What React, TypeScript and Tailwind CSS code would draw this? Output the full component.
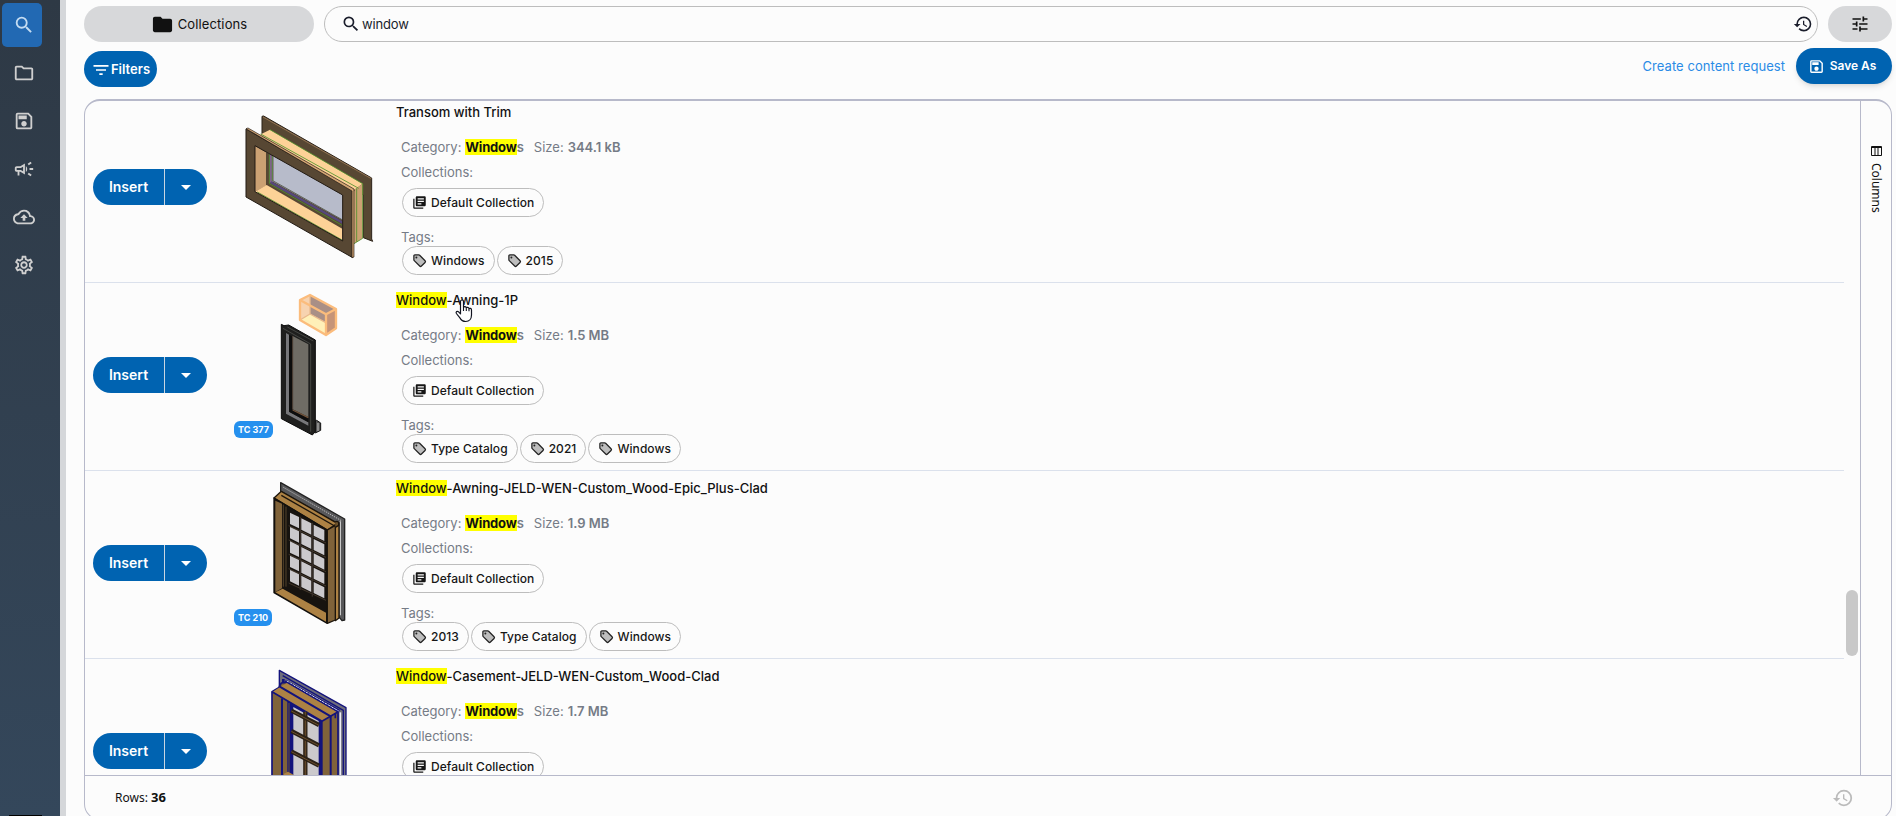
import React from 'react';
import {
  MdArrowDropDown,
  MdFilterList,
  MdFolder,
  MdHistory,
  MdLibraryBooks,
  MdOutlineCampaign,
  MdOutlineCloudUpload,
  MdOutlineFolder,
  MdOutlineSave,
  MdOutlineSettings,
  MdSearch,
  MdTune,
} from 'react-icons/md';

const TransomArt = () => (
  <svg width="180" height="187" viewBox="0 0 180 187">
    <g transform="translate(-140 0) scale(.33333)" strokeLinejoin="round">
      <path d="M546 64L551 63L875 249V432L878 439L850 428V300L546 125Z" fill="#574733" stroke="#2a2118" strokeWidth="3" />
      <path d="M549 66L874 251" stroke="#b08a60" strokeWidth="2" />
      <path d="M538 120L570 104L848 266L824 284Z" fill="#fdd297" />
      <path d="M822 284L848 266V430L822 446Z" fill="#cba173" />
      <path d="M542 117L836 280M570 104L848 266V430L822 446M830 280V440" fill="none" stroke="#4f8f2b" strokeWidth="2.5" />
      <path d="M520 113L824 287" stroke="#2a2118" strokeWidth="2" />
      <path d="M525 152L788 300V438L525 290Z" fill="#574733" />
      <path d="M525 152L558 172V272L525 290Z" fill="#cba173" />
      <path d="M525 290L560 270L788 402V438Z" fill="#fdd297" />
      <path d="M580 182L788 300V376L580 260Z" fill="#b7bbca" />
      <path d="M568 178L580 184V260L568 264Z" fill="#7d6488" />
      <path d="M572 262L788 383" stroke="#55487c" strokeWidth="7" />
      <path d="M580 258L788 375" stroke="#4c5145" strokeWidth="2.5" />
      <path d="M568 176V266L788 392M532 291L788 436M577 182V258" fill="none" stroke="#4f8f2b" strokeWidth="2.5" />
      <path
        d="M498 102L818 286V488L498 306ZM525 152V290L788 438V300Z"
        fill="#574733"
        fillRule="evenodd"
        stroke="#211a13"
        strokeWidth="3"
      />
      <path d="M498 101L504 99L822 282V486L816 488V288Z" fill="#d3a574" stroke="#211a13" strokeWidth="2" />
    </g>
  </svg>
);

const AwningArt = () => (
  <svg width="180" height="187" viewBox="0 0 180 187">
    <g transform="translate(0 2) scale(.33333)" strokeLinejoin="round">
      <path d="M240 45L270 30V87L240 105Z" fill="#f7d3b0" />
      <path d="M270 30L350 72V130L270 87Z" fill="#a98f86" />
      <path d="M240 105L270 87L350 130L318 150Z" fill="#fff0b8" />
      <path d="M318 88L350 72V130L318 150Z" fill="#c69478" />
      <path d="M270 30V87L240 105M270 87L316 112" fill="none" stroke="#e9b98c" strokeWidth="4" />
      <path d="M240 45L270 30L348 72V130L318 150L240 105ZM240 45L318 88L348 72M318 88V150" fill="none" stroke="#fbbc7c" strokeWidth="7" />

      <path d="M278 412L290 406L302 414V436L286 444Z" fill="#555" stroke="#111" strokeWidth="3" />
      <path d="M294 414V438" stroke="#aaa" strokeWidth="4" />
      <path d="M184 118L192 122L206 120L286 165V440L277 450L184 401Z" fill="#1f1f1e" stroke="#0b0b0b" strokeWidth="3" />
      <path d="M198 144L207 149V380L265 412V422L198 386Z" fill="#77777a" />
      <path d="M207 149L217 154V374L265 400V412L207 380Z" fill="#0d0d0d" />
      <path d="M218 153L265 178V396L218 373Z" fill="#6f6c65" />
      <path d="M218 375L265 398" stroke="#73543b" strokeWidth="4" />
      <path d="M218 153V373" stroke="#4d3e33" strokeWidth="3" />
      <path d="M189 130L272 177V440M202 126L280 168" fill="none" stroke="#444542" strokeWidth="3" />
    </g>
  </svg>
);

const paneRows = [0, 1, 2, 3, 4];

const CladArt = () => (
  <svg width="180" height="187" viewBox="0 0 180 187">
    <g transform="translate(0 -1) scale(.33333)" strokeLinejoin="round">
      <path d="M182 38L374 147V450L366 452L356 440V162L182 64Z" fill="#58585a" stroke="#222" strokeWidth="4" />
      <path d="M190 52L364 152" stroke="#b9b9b9" strokeWidth="3" strokeDasharray="4 3" />
      <path d="M361 154V436" stroke="#c9c9c9" strokeWidth="4" />
      <path d="M346 160L357 158V444L346 452Z" fill="#ad8244" stroke="#1c150c" strokeWidth="4" />
      <path d="M162 84L184 64L352 160L322 180Z" fill="#ad8244" stroke="#1c150c" strokeWidth="4" />
      <path d="M184 76L344 168" stroke="#1c150c" strokeWidth="4" />
      <path d="M162 84L322 180V460L162 368Z" fill="#17130f" stroke="#12100d" strokeWidth="4" />
      <path d="M166 92L186 101V355L166 366Z" fill="#80633a" />
      <path d="M190 104V350M198 110V350" stroke="#55442c" strokeWidth="3" />
      <path d="M166 367L188 356L318 428V455Z" fill="#ad8244" />
      <path d="M322 180L346 166V450L322 460Z" fill="#80633a" stroke="#1c150c" strokeWidth="4" />
      {paneRows.map((r) => (
        <g key={r} transform={`translate(0 ${r * 43})`} fill="#cbc9cc">
          <path d="M210 128L237 141V175L210 162Z" />
          <path d="M244 145L274 160V194L244 179Z" />
          <path d="M281 164L313 180V213L281 197Z" />
          <path d="M206 167L318 219" stroke="#43372a" strokeWidth="3" />
        </g>
      ))}
      <path d="M241 140V360M277 158V380" stroke="#352d27" strokeWidth="4" />
      <path d="M345 156Q358 150 356 166L346 172" fill="#6b5029" stroke="#1c150c" strokeWidth="4" />
    </g>
  </svg>
);

const CasementArt = () => (
  <svg width="180" height="187" viewBox="0 0 180 187">
    <g transform="translate(0 -4) scale(.33333)" strokeLinejoin="round">
      <path d="M178 46L378 158V560H352V180L178 92Z" fill="#6f6e7c" stroke="#13137c" strokeWidth="4" />
      <path d="M188 62L370 166V560" fill="none" stroke="#13137c" strokeWidth="4" />
      <path d="M190 72V88M196 78L358 168" fill="none" stroke="#13137c" strokeWidth="8" />
      <path d="M200 78L356 168" stroke="#f2f2f8" strokeWidth="3" strokeDasharray="9 2" />
      <path d="M361 172V560" stroke="#ececf4" strokeWidth="5" />
      <path d="M156 110L176 98L184 84L200 82L354 172V560H156Z" fill="#80633a" stroke="#13137c" strokeWidth="5" />
      <path d="M158 110L180 96L200 84L352 172L308 200Z" fill="#ad8244" />
      <path d="M178 94L332 184V560" fill="none" stroke="#13137c" strokeWidth="6" />
      <path d="M156 110L306 199L352 172M346 176V190" fill="none" stroke="#13137c" strokeWidth="5" />
      <path d="M186 130V560" stroke="#13137c" strokeWidth="6" />
      <path d="M202 138L308 200V560H202Z" fill="#13137c" />
      <path d="M207 144V560" stroke="#6b5433" strokeWidth="3" />
      <path d="M220 156L296 198V560H220Z" fill="#cbc9cc" />
      <path d="M256 170V560" stroke="#33271b" strokeWidth="13" />
      <path d="M256 170V560" stroke="#6b4e2b" strokeWidth="3" />
      {paneRows.slice(0, 3).map((r) => (
        <g key={r} transform={`translate(0 ${r * 61})`}>
          <path d="M214 167L297 210" stroke="#2b2117" strokeWidth="13" />
          <path d="M214 168L297 211" stroke="#6b4e2b" strokeWidth="3" />
        </g>
      ))}
      <path d="M192 356L204 350L222 360V380H192Z" fill="#ad8244" />
    </g>
  </svg>
);

const TagIcon = () => (
  <svg width="15" height="15" viewBox="0 0 24 24" className="shrink-0">
    <path
      d="M3 4.500v6.300c0 .6.2 1 .6 1.400l8.700 8.700c.8.800 2 .800 2.800 0l5.800-5.800c.8-.8.8-2 0-2.800L12.200 3.600C11.800 3.200 11.300 3 10.800 3H4.500C3.700 3 3 3.700 3 4.500z"
      fill="#bdbdbd"
      stroke="#222"
      strokeWidth="2"
    />
    <circle cx="7" cy="7" r="1.600" fill="#222" />
  </svg>
);

const HandCursor = () => (
  <svg width="20" height="24" viewBox="0 0 20 24" className="absolute left-[58px] top-[7px]">
    <path
      d="M6.500 2.500c0-2 3-2 3 0v6c.4-1.300 2.700-1.100 2.800.4.600-1 2.600-.7 2.700.8.700-.8 2.500-.4 2.500 1.200V16c0 3.600-2.200 6.500-5.800 6.500-3 0-4.500-1.200-5.800-3.600L2.400 14.500c-1-1.800.9-2.900 2.200-1.600l1.900 2V2.500z"
      fill="#fff"
      stroke="#10131f"
      strokeWidth="1.200"
      strokeLinejoin="round"
    />
    <path d="M9.500 8.500v3.500M12.300 9.200V12M15 10v2.300" stroke="#10131f" strokeWidth="1.100" />
  </svg>
);

const navItems = [
  { id: 'search', icon: <MdSearch size={22} /> },
  { id: 'folder', icon: <MdOutlineFolder size={22} /> },
  { id: 'saved', icon: <MdOutlineSave size={22} /> },
  { id: 'news', icon: <MdOutlineCampaign size={22} /> },
  { id: 'upload', icon: <MdOutlineCloudUpload size={22} /> },
  { id: 'settings', icon: <MdOutlineSettings size={22} /> },
];

const families = [
  { match: '', name: 'Transom with Trim', size: '344.1 kB', tags: ['Windows', '2015'], art: <TransomArt /> },
  {
    match: 'Window',
    name: '-Awning-1P',
    size: '1.5 MB',
    tags: ['Type Catalog', '2021', 'Windows'],
    badge: 'TC 377',
    art: <AwningArt />,
    hovered: true,
  },
  {
    match: 'Window',
    name: '-Awning-JELD-WEN-Custom_Wood-Epic_Plus-Clad',
    size: '1.9 MB',
    tags: ['2013', 'Type Catalog', 'Windows'],
    badge: 'TC 210',
    art: <CladArt />,
  },
  {
    match: 'Window',
    name: '-Casement-JELD-WEN-Custom_Wood-Clad',
    size: '1.7 MB',
    tags: [],
    art: <CasementArt />,
  },
];

const Chip = ({ icon, label }: { icon: React.ReactNode; label: string }) => (
  <span className="flex h-[29px] items-center gap-1 rounded-full border border-[#bdbdbd] pl-[9px] pr-[9px] text-xs font-medium tracking-[0.06px] text-[#161616]">
    {icon}
    {label}
  </span>
);

const FamilyRow = ({ family }: { family: (typeof families)[number] }) => (
  <div className="flex h-[188px] shrink-0 border-b border-[#dbe1ec]">
    <div className="ml-2 mt-[74px] flex h-9 w-[114px] overflow-hidden rounded-full bg-[#0063b1] text-white">
      <button className="w-[71px] text-sm font-semibold">Insert</button>
      <button className="flex flex-1 items-center justify-center border-l border-[#c9d6e2] pr-px">
        <MdArrowDropDown size={24} />
      </button>
    </div>
    <div className="relative ml-[13px] w-[176px] shrink-0">
      {family.art}
      {family.badge && (
        <span className="absolute left-[14px] top-[138px] flex h-[17px] items-center rounded-md bg-[#2590ee] px-1 text-[9px] font-bold text-white">
          {family.badge}
        </span>
      )}
    </div>
    <div className="pt-[9px] text-[13px] leading-4">
      <div className="relative whitespace-nowrap font-medium text-[#111]">
        {family.match && <mark className="bg-[#ffff00] text-[#111]">{family.match}</mark>}
        {family.name}
        {family.hovered && <HandCursor />}
      </div>
      <div className="ml-[5px] mt-[19px] flex text-[#757b86]">
        <span>Category:</span>
        <span className="ml-1 font-semibold">
          <mark className="bg-[#ffff00] font-bold tracking-[-0.15px] text-[#111]">Window</mark>s
        </span>
        <span className="ml-[10px]">Size:</span>
        <span className="ml-1 font-semibold">{family.size}</span>
      </div>
      <div className="ml-[5px] mt-[9px] text-[#757b86]">Collections:</div>
      <div className="ml-[6px] mt-2 flex">
        <Chip icon={<MdLibraryBooks size={15} />} label="Default Collection" />
      </div>
      {family.tags.length > 0 && (
        <>
          <div className="ml-[5px] mt-3 text-[#757b86]">Tags:</div>
          <div className="ml-[6px] mt-px flex gap-[2px]">
            {family.tags.map((tag) => (
              <Chip key={tag} icon={<TagIcon />} label={tag} />
            ))}
          </div>
        </>
      )}
    </div>
  </div>
);

const Sidebar = () => (
  <nav className="flex w-[66px] shrink-0 flex-col border-r-[6px] border-[#d5d7da] bg-linear-to-b from-[#2e3945] to-[#34475b] bg-clip-padding pt-[3px]">
    {navItems.map((item, idx) => (
      <div
        key={item.id}
        className={`mb-1 ml-[2px] flex h-11 w-10 items-center justify-center rounded-[5px] ${
          idx === 0 ? 'bg-[#2269b3] pl-[3px] text-[#c4dcf2]' : 'pl-[4px] text-[#cfcfcf]'
        }`}
      >
        {item.icon}
      </div>
    ))}
    <div className="ml-[9px] mt-auto h-px w-[33px] bg-black"></div>
  </nav>
);

export default function App() {
  return (
    <div className="flex h-[816px] w-[1896px] overflow-hidden bg-[#fcfcfc] font-[Inter,sans-serif] text-[#111]">
      <Sidebar />
      <main className="flex min-w-0 flex-1 flex-col pl-[18px] pr-1 pt-[6px]">
        <div className="flex shrink-0 gap-[10px]">
          <button className="flex h-9 w-[230px] items-center justify-center gap-1 rounded-full bg-[#d7d8da] pt-px text-[13px] tracking-[0.12px]">
            <MdFolder size={23} />
            Collections
          </button>
          <div className="flex h-9 flex-1 items-center rounded-full border border-[#bdbdbd] pl-4 pr-1 text-[13px] text-[#1a1d2b]">
            <MdSearch size={20} />
            <span className="ml-px flex-1 pt-px tracking-[-0.15px]">window</span>
            <MdHistory size={20} />
          </div>
          <button className="flex h-9 w-16 items-center justify-center rounded-full bg-[#d7d8da]">
            <MdTune size={20} />
          </button>
        </div>

        <div className="flex h-[57px] shrink-0 items-start">
          <button className="mt-[9px] flex h-9 w-[73px] items-center justify-center rounded-full bg-[#0063b1] pt-px text-[13px] font-semibold text-white">
            <MdFilterList size={20} />
            Filters
          </button>
          <span className="ml-auto mt-[14px] text-[13px] leading-5 tracking-[0.05px] text-[#2a8be6]">Create content request</span>
          <button className="ml-[11px] mt-[6px] flex h-9 w-24 items-center justify-center gap-[5px] rounded-full bg-[#0063b1] pr-1 text-xs font-semibold text-white shadow-md">
            <MdOutlineSave size={17} />
            Save As
          </button>
        </div>

        <div className="flex h-[721px] shrink-0 flex-col overflow-hidden rounded-[16px] border border-t-2 border-[#b7b9ca]">
          <div className="flex h-[674px] shrink-0">
            <div className="min-w-0 flex-1 overflow-hidden pr-[15px]">
              <div className="-mt-[6px] flex flex-col">
                {families.map((family) => (
                  <FamilyRow key={family.name} family={family} />
                ))}
              </div>
            </div>
            <div className="-ml-[13px] mr-[2px] mt-[489px] h-[66px] w-3 rounded-full bg-[#c8c8c8]"></div>
            <div className="flex w-[31px] flex-col items-center border-l border-[#b7b9ca] pt-[45px]">
              <svg width="11" height="10" viewBox="0 0 11 10">
                <path d="M.5 .5h10v9H.5zM.5 1.500h10M4 1v8M7 1v8" fill="none" stroke="#111" />
              </svg>
              <span className="mt-[7px] font-['Noto_Sans',sans-serif] text-xs leading-4 [writing-mode:vertical-rl]">Columns</span>
            </div>
          </div>
          <div className="flex h-[45px] shrink-0 items-center border-t border-[#b7b9ca] pl-[30px] pr-[37px]">
            <span className="font-['Noto_Sans',sans-serif] text-xs">
              Rows: <b className="text-[13px]">36</b>
            </span>
            <MdHistory size={22} className="ml-auto text-[#bbb]" />
          </div>
        </div>
      </main>
    </div>
  );
}
